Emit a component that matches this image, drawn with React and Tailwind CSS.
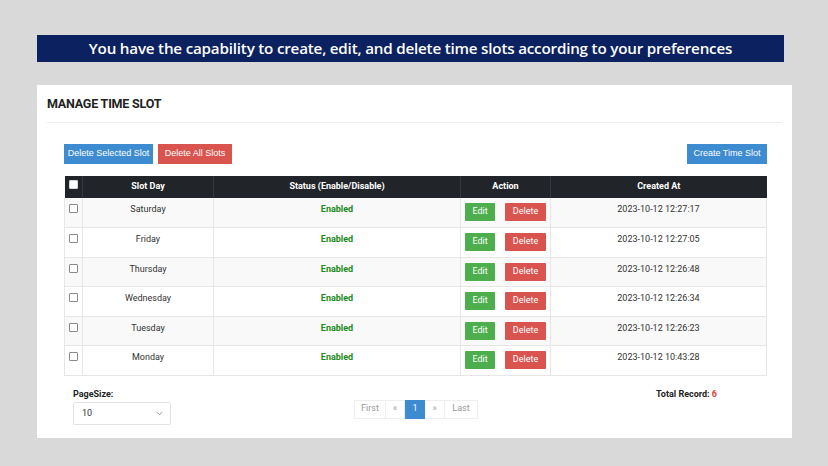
import React from 'react'

const rows = [
  { day: 'Saturday', created: '2023-10-12 12:27:17' },
  { day: 'Friday', created: '2023-10-12 12:27:05' },
  { day: 'Thursday', created: '2023-10-12 12:26:48' },
  { day: 'Wednesday', created: '2023-10-12 12:26:34' },
  { day: 'Tuesday', created: '2023-10-12 12:26:23' },
  { day: 'Monday', created: '2023-10-12 10:43:28' },
]

const Box = ({ dark }) => (
  <span
    className={
      dark
        ? 'inline-block w-[9px] h-[9px] bg-white rounded-[1px] border border-gray-300'
        : 'inline-block w-[9px] h-[9px] bg-white rounded-[1px] border border-[#8a8a8a]'
    }
  />
)

const App = () => {
  return (
    <div className="w-[828px] h-[466px] bg-[#d9d9d9] pt-[35px] pl-[37px] font-['Roboto',sans-serif] overflow-hidden">
      <div className="w-[747px] h-[27px] bg-[#0b2160] flex items-center justify-center text-white text-[15.2px] font-semibold font-['Open_Sans',sans-serif] tracking-[-0.2px]">
        You have the capability to create, edit, and delete time slots according to your preferences
      </div>

      <div className="mt-[23px] w-[755px] h-[353px] bg-white px-[10px]">
        <div className="h-[38px] border-b border-[#eeeeee] flex items-end pb-[8px] text-[12.5px] font-bold text-[#222] tracking-[-0.2px]">
          MANAGE TIME SLOT
        </div>

        <div className="pl-[17px] pr-[15px]">
          <div className="mt-[21px] flex items-center justify-between">
            <div className="flex gap-[5px]">
              <button className="h-[20px] w-[89px] bg-[#3d8bd0] text-white text-[9px] font-['Liberation_Sans',sans-serif]">
                Delete Selected Slot
              </button>
              <button className="h-[20px] w-[74px] bg-[#d9534f] text-white text-[9px] font-['Liberation_Sans',sans-serif]">
                Delete All Slots
              </button>
            </div>
            <button className="h-[20px] w-[80px] bg-[#3d8bd0] text-white text-[9px] font-['Liberation_Sans',sans-serif]">
              Create Time Slot
            </button>
          </div>

          <table className="mt-[12px] w-[703px] border-collapse text-[9px] text-[#333]">
            <thead>
              <tr className="h-[22px] bg-[#212529] text-white font-bold">
                <th className="w-[18px] text-center border-r border-[#32383e]">
                  <Box dark />
                </th>
                <th className="w-[131px] border-r border-[#32383e]">Slot Day</th>
                <th className="w-[247px] border-r border-[#32383e]">Status (Enable/Disable)</th>
                <th className="w-[90px] border-r border-[#32383e]">Action</th>
                <th>Created At</th>
              </tr>
            </thead>
            <tbody>
              {rows.map((r, i) => (
                <tr
                  key={r.day}
                  className={(i % 2 === 0 ? 'bg-[#f9f9f9]' : 'bg-white') + ' h-[29.5px] border-b border-[#e6e6e6]'}
                >
                  <td className="text-center align-top pt-[6px] border-x border-[#e6e6e6]">
                    <Box />
                  </td>
                  <td className="text-center align-top pt-[5px] border-r border-[#e6e6e6]">{r.day}</td>
                  <td className="text-center align-top pt-[5px] border-r border-[#e6e6e6] font-bold text-[#1a8a1a]">
                    Enabled
                  </td>
                  <td className="align-top pt-[5px] border-r border-[#e6e6e6]">
                    <div className="flex gap-[10px] pl-[4px]">
                      <span className="h-[18px] w-[30px] bg-[#4cae4c] text-white flex items-center justify-center rounded-[1px]">
                        Edit
                      </span>
                      <span className="h-[18px] w-[41px] bg-[#d9534f] text-white flex items-center justify-center rounded-[1px]">
                        Delete
                      </span>
                    </div>
                  </td>
                  <td className="text-center align-top pt-[5px] border-r border-[#e6e6e6]">{r.created}</td>
                </tr>
              ))}
            </tbody>
          </table>

          <div className="mt-[12px] flex items-start pl-[9px] pr-[50px]">
            <div className="w-[98px]">
              <div className="text-[9px] font-bold text-[#222]">PageSize:</div>
              <div className="mt-[1px] w-[98px] h-[23px] border border-[#e3e3e3] rounded-[2px] flex items-center justify-between pl-[8px] pr-[7px] text-[9px] text-[#333]">
                <span>10</span>
                <svg width="7" height="5" viewBox="0 0 8 6" fill="none" stroke="#888" strokeWidth="1.1">
                  <path d="M1 1.5 L4 4.5 L7 1.5" />
                </svg>
              </div>
            </div>

            <div className="mt-[12px] flex h-[19px] text-[9px] text-[#999] ml-[183px]">
              <span className="w-[32px] flex items-center justify-center border border-[#eeeeee]">First</span>
              <span className="w-[19px] flex items-center justify-center border-y border-r border-[#eeeeee]">«</span>
              <span className="w-[20px] flex items-center justify-center bg-[#3d8bd0] text-white">1</span>
              <span className="w-[20px] flex items-center justify-center border-y border-r border-[#eeeeee]">»</span>
              <span className="w-[33px] flex items-center justify-center border-y border-r border-[#eeeeee]">Last</span>
            </div>

            <div className="text-[9px] font-bold text-[#222] ml-auto">
              Total Record: <span className="text-[#e53935]">6</span>
            </div>
          </div>
        </div>
      </div>
    </div>
  )
}

export default App
